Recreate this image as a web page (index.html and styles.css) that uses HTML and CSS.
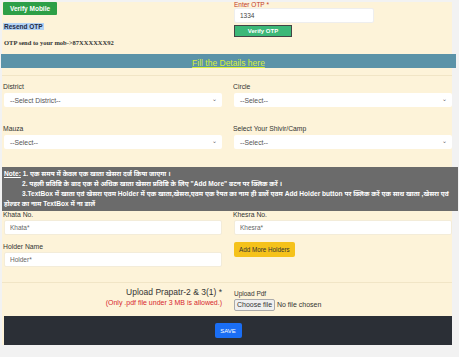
FILE: index.html
```html
<!DOCTYPE html>
<html lang="hi">

<head>
    <meta charset="UTF-8">
    <meta name="viewport" content="width=device-width, initial-scale=1.0">
    <title>Register Details</title>
    <link rel="stylesheet" href="styles.css">
</head>

<body>
    <div class="page">
        <section class="otp-area">
            <div class="otp-left">
                <button class="btn-verify-mobile">Verify Mobile</button>
                <div class="resend"><span>Resend OTP</span></div>
                <p class="otp-msg">OTP send to your mob-&gt;87XXXXXX92</p>
            </div>
            <div class="otp-right">
                <label class="lbl-red">Enter OTP *</label>
                <input class="otp-input" type="text" value="1334">
                <button class="btn-verify-otp">Verify OTP</button>
            </div>
        </section>

        <div class="title-bar"><a href="#">Fill the Details here</a></div>
        <hr class="faint">

        <section class="grid">
            <div class="field">
                <label>District</label>
                <div class="select"><span>--Select District--</span><i>&#8964;</i></div>
            </div>
            <div class="field">
                <label>Circle</label>
                <div class="select"><span>--Select--</span><i>&#8964;</i></div>
            </div>
            <div class="field">
                <label>Mauza</label>
                <div class="select"><span>--Select--</span><i>&#8964;</i></div>
            </div>
            <div class="field">
                <label>Select Your Shivir/Camp</label>
                <div class="select"><span>--Select--</span><i>&#8964;</i></div>
            </div>
        </section>

        <div class="note">
            <p><u>Note:</u> 1. एक समय में केवल एक खाता खेसरा दर्ज किया जाएगा ।</p>
            <p class="indent">2. पहली प्रविष्टि के बाद एक से अधिक खाता खेसरा प्रविष्टि के लिए "Add More" बटन पर क्लिक करें ।</p>
            <p class="indent">3.TextBox में खाता एवं खेसरा एवम Holder में एक खाता,खेसरा,एवम एक रैयत का नाम ही डालें एवम Add Holder button पर क्लिक करें एक साथ खाता ,खेसरा एवं होल्डर का नाम TextBox में ना डालें</p>
        </div>

        <section class="grid grid-tight">
            <div class="field">
                <label>Khata No.</label>
                <input class="text-input" type="text" placeholder="Khata*">
            </div>
            <div class="field">
                <label>Khesra No.</label>
                <input class="text-input" type="text" placeholder="Khesra*">
            </div>
            <div class="field">
                <label>Holder Name</label>
                <input class="text-input" type="text" placeholder="Holder*">
            </div>
            <div class="field">
                <button class="btn-add">Add More Holders</button>
            </div>
        </section>
        <hr class="faint">

        <section class="upload">
            <div class="upload-left">
                <div class="upload-title">Upload Prapatr-2 &amp; 3(1) *</div>
                <div class="upload-hint">(Only .pdf file under 3 MB is allowed.)</div>
            </div>
            <div class="upload-right">
                <label>Upload Pdf</label>
                <div class="file-row"><span class="file-btn">Choose file</span> No file chosen</div>
            </div>
        </section>

        <footer class="save-bar">
            <button class="btn-save">SAVE</button>
        </footer>
    </div>
</body>

</html>
```

FILE: styles.css
```css
body {
    margin: 0;
    padding: 0;
    background-color: #f2f2f2;
    font-family: "Liberation Sans", Arial, "Noto Sans", sans-serif;
    color: #333;
}

.page {
    width: 450px;
    margin-left: 2px;
    margin-top: 2px;
    background-color: #fdf3d9;
}

.otp-area {
    display: grid;
    grid-template-columns: 230px 220px;
    height: 52px;
}

.otp-left {
    padding-left: 1px;
}

.btn-verify-mobile {
    display: block;
    height: 13px;
    padding: 0 7px;
    margin: 0;
    font-family: inherit;
    font-size: 6.5px;
    font-weight: bold;
    color: #fff;
    background-color: #2d9f47;
    border: none;
    border-radius: 1px;
}

.resend {
    margin-top: 8px;
    font-size: 6.5px;
    font-weight: bold;
    color: #1d2a44;
}

.resend span {
    background-color: #b3d3f5;
    padding: 0 1px;
}

.otp-msg {
    margin: 9px 0 0 1px;
    font-family: "Liberation Serif", serif;
    font-weight: bold;
    font-size: 6.5px;
    color: #333;
}

.otp-right {
    padding-left: 2px;
}

.lbl-red {
    display: block;
    font-size: 6.5px;
    color: #c0392b;
    line-height: 7px;
    margin-top: -1px;
}

.otp-input {
    display: block;
    box-sizing: border-box;
    width: 140px;
    height: 15px;
    margin: 0;
    padding: 0 5px;
    font-family: inherit;
    font-size: 6.5px;
    color: #444;
    background: #fff;
    border: 1px solid #eee;
    border-radius: 2px;
}

.btn-verify-otp {
    display: block;
    box-sizing: border-box;
    width: 58px;
    height: 12px;
    margin-top: 2px;
    padding: 0;
    font-family: inherit;
    font-size: 6px;
    font-weight: bold;
    color: #fff;
    background-color: #3cb878;
    border: 1px solid #444;
}

.title-bar {
    width: 455px;
    margin-left: -1px;
    height: 14px;
    line-height: 14px;
    text-align: center;
    background-color: #5b93a8;
}

.title-bar a {
    font-size: 8.5px;
    color: #d8ef3a;
    text-decoration: underline;
}

.faint {
    margin: 7px 0 0 0;
    border: none;
    border-top: 1px solid #f1e5c6;
}

.grid {
    display: grid;
    grid-template-columns: 218px 218px;
    column-gap: 12px;
    row-gap: 18px;
    padding: 7px 0 18px 2px;
}

.field label {
    display: block;
    font-size: 6.8px;
    color: #333;
    margin-left: -1px;
    margin-bottom: 2px;
    line-height: 8px;
}

.select {
    display: flex;
    justify-content: space-between;
    align-items: center;
    height: 14px;
    padding: 0 5px 0 6px;
    background: #fff;
    border-radius: 2px;
    font-size: 6.8px;
    color: #555;
}

.select i {
    font-style: normal;
    font-size: 6px;
    color: #666;
    line-height: 6px;
    margin-top: -3px;
}

.note {
    width: 456px;
    background-color: #6b6b6b;
    color: #fff;
    padding: 2px 0 2px 2px;
    box-sizing: border-box;
    font-family: "Liberation Sans", "Noto Sans Devanagari", "Noto Sans", sans-serif;
    font-size: 6.6px;
    font-weight: bold;
    line-height: 10px;
}

.note p {
    margin: 0;
}

.note .indent {
    text-indent: 18px;
}

.grid-tight {
    row-gap: 8px;
    padding: 0 0 8px 2px;
}

.grid-tight .field label {
    margin-bottom: 1px;
}

.text-input {
    display: block;
    box-sizing: border-box;
    width: 100%;
    height: 15px;
    margin: 0;
    padding: 0 5px;
    font-family: inherit;
    font-size: 6.5px;
    background: #fff;
    border: 1px solid #f3ecd9;
    border-radius: 2px;
}

.text-input::placeholder {
    color: #666;
}

.btn-add {
    display: block;
    height: 15px;
    padding: 0 5px;
    margin-top: -1px;
    font-family: inherit;
    font-size: 6.3px;
    color: #333;
    background-color: #f5c21b;
    border: none;
    border-radius: 2px;
}

.upload {
    display: grid;
    grid-template-columns: 220px 218px;
    column-gap: 12px;
    height: 33px;
    box-sizing: border-box;
    padding-top: 4px;
}

.upload-left {
    text-align: right;
}

.upload-title {
    font-size: 8.5px;
    color: #333;
    line-height: 11px;
}

.upload-hint {
    font-size: 7px;
    color: #d7262e;
    margin-top: 1px;
    line-height: 8px;
}

.upload-right label {
    display: block;
    font-size: 6.5px;
    color: #333;
    margin-top: 3px;
    line-height: 7px;
}

.file-row {
    margin-top: 2px;
    font-size: 7px;
    line-height: 12px;
    color: #333;
}

.file-btn {
    display: inline-block;
    padding: 0 2px;
    line-height: 10px;
    background: #efefef;
    border: 1px solid #aaa;
    border-radius: 2px;
}

.save-bar {
    margin-left: 2px;
    height: 29px;
    display: flex;
    justify-content: center;
    align-items: center;
    background-color: #2b2f36;
}

.btn-save {
    width: 27px;
    height: 15px;
    padding: 0;
    font-family: inherit;
    font-size: 6px;
    color: #fff;
    background-color: #1a6ef5;
    border: none;
    border-radius: 2px;
}
```
